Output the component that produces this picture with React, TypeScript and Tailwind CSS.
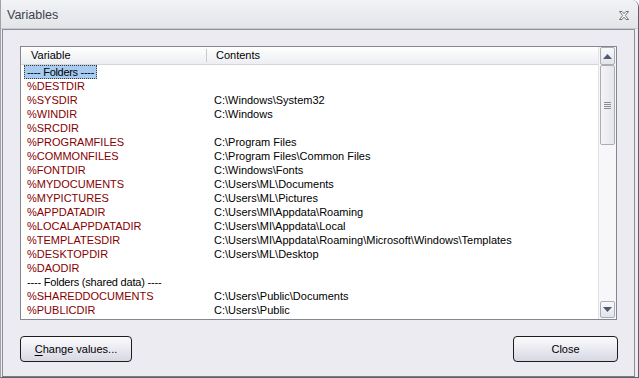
import React from "react";

const rows: { v: string; c?: string; kind?: "sep" | "sel" }[] = [
  { v: "---- Folders ----", kind: "sel" },
  { v: "%DESTDIR" },
  { v: "%SYSDIR", c: "C:\\Windows\\System32" },
  { v: "%WINDIR", c: "C:\\Windows" },
  { v: "%SRCDIR" },
  { v: "%PROGRAMFILES", c: "C:\\Program Files" },
  { v: "%COMMONFILES", c: "C:\\Program Files\\Common Files" },
  { v: "%FONTDIR", c: "C:\\Windows\\Fonts" },
  { v: "%MYDOCUMENTS", c: "C:\\Users\\ML\\Documents" },
  { v: "%MYPICTURES", c: "C:\\Users\\ML\\Pictures" },
  { v: "%APPDATADIR", c: "C:\\Users\\MI\\Appdata\\Roaming" },
  { v: "%LOCALAPPDATADIR", c: "C:\\Users\\MI\\Appdata\\Local" },
  { v: "%TEMPLATESDIR", c: "C:\\Users\\MI\\Appdata\\Roaming\\Microsoft\\Windows\\Templates" },
  { v: "%DESKTOPDIR", c: "C:\\Users\\ML\\Desktop" },
  { v: "%DAODIR" },
  { v: "---- Folders (shared data) ----", kind: "sep" },
  { v: "%SHAREDDOCUMENTS", c: "C:\\Users\\Public\\Documents" },
  { v: "%PUBLICDIR", c: "C:\\Users\\Public" },
];

function CloseX() {
  return (
    <svg width="12" height="11" viewBox="0 0 12 11">
      <path
        d="M1.5 1.5 H4 L6 3.8 L8 1.5 H10.5 L7.3 5.5 L10.5 9.5 H8 L6 7.2 L4 9.5 H1.5 L4.7 5.5 Z"
        fill="#ffffff"
        stroke="#6e6f73"
        strokeWidth="1"
        strokeLinejoin="miter"
      />
    </svg>
  );
}

export default function App() {
  return (
    <div
      className="w-[639px] h-[378px] flex flex-col bg-[#ecebf2] border-l border-l-[#a0a2a8] border-r border-r-[#5d6068] border-b border-b-[#5d6068] rounded-tr-[7px] overflow-hidden"
      style={{ fontFamily: '"Liberation Sans", Arial, sans-serif' }}
    >
      {/* Title bar */}
      <div className="h-[29px] shrink-0 flex items-center justify-between pl-[6px] pr-[8px] pt-[2px] bg-gradient-to-b from-[#f2f3f5] to-[#e4e5e9] border-b border-[#c9cbd1]">
        <span className="text-[12.5px] text-[#3d3f52] leading-none">Variables</span>
        <CloseX />
      </div>

      {/* Frame */}
      <div className="flex-1 ml-[1px] mr-[3px] flex flex-col border border-[#8d9099] border-b-[#7a7d86] bg-[#ecebf2] pt-[16px] px-[17px] pb-[14px]">
        {/* Listbox */}
        <div className="h-[274px] shrink-0 border border-[#828790] bg-white flex">
          <div className="flex-1 flex flex-col min-w-0">
            <div className="h-[18px] shrink-0 flex items-center bg-gradient-to-b from-[#ffffff] to-[#eceef2] border-b border-[#d5d5d5] text-[11px] text-black">
              <div className="w-[185px] pl-[10px] leading-none">Variable</div>
              <div className="w-[1px] h-[13px] bg-[#c7c9ce]" />
              <div className="pl-[9px] leading-none">Contents</div>
            </div>
            <div className="flex flex-col text-[11px]">
              {rows.map((r, i) => (
                <div key={i} className="h-[14px] flex items-center leading-none">
                  {r.kind === "sel" ? (
                    <div className="ml-[3px] pl-[3px] pr-[3px] h-[14px] flex items-center bg-[#a8cbf1] outline outline-1 outline-dotted outline-[#3a3a3a] -outline-offset-1 text-black tracking-[-0.3px]">
                      {r.v}
                    </div>
                  ) : r.kind === "sep" ? (
                    <div className="pl-[6px] text-black tracking-[-0.2px]">{r.v}</div>
                  ) : (
                    <>
                      <div className="w-[193px] pl-[6px] text-[#850000]">{r.v}</div>
                      <div className="text-black whitespace-nowrap">{r.c ?? ""}</div>
                    </>
                  )}
                </div>
              ))}
            </div>
          </div>
          {/* Scrollbar */}
          <div className="w-[18px] shrink-0 flex flex-col border-l border-[#e3e3e6] bg-[#f7f7f9] px-[1px] pt-[0px] pb-[1px]">
            <div className="h-[18px] shrink-0 flex items-center justify-center rounded-[2px] border border-[#a9adb6] bg-gradient-to-b from-[#f9f9fb] to-[#e3e4e9]">
              <svg width="9" height="5" viewBox="0 0 9 5">
                <path d="M0 5 L4.5 0 L9 5 Z" fill="#4b5878" />
              </svg>
            </div>
            <div className="h-[80px] shrink-0 flex items-center justify-center rounded-[2px] border border-[#a9adb6] bg-gradient-to-r from-[#f4f4f6] to-[#e6e7ec]">
              <div className="flex flex-col gap-[1px]">
                <div className="w-[7px] h-[1px] bg-[#8a8d94]" />
                <div className="w-[7px] h-[1px] bg-[#8a8d94]" />
                <div className="w-[7px] h-[1px] bg-[#8a8d94]" />
                <div className="w-[7px] h-[1px] bg-[#8a8d94]" />
              </div>
            </div>
            <div className="flex-1" />
            <div className="h-[17px] shrink-0 flex items-center justify-center rounded-[2px] border border-[#a9adb6] bg-gradient-to-b from-[#f9f9fb] to-[#e3e4e9]">
              <svg width="9" height="5" viewBox="0 0 9 5">
                <path d="M0 0 L9 0 L4.5 5 Z" fill="#4b5878" />
              </svg>
            </div>
          </div>
        </div>

        {/* Buttons */}
        <div className="mt-[16px] h-[26px] flex justify-between">
          <button className="w-[112px] h-[26px] rounded-[4px] border border-[#1c1c1c] bg-gradient-to-b from-[#fbfbfd] to-[#d8d8e4] text-[11px] text-black">
            <span className="underline underline-offset-2">C</span>hange values...
          </button>
          <button className="w-[105px] h-[26px] -mr-[1px] rounded-[4px] border border-[#1c1c1c] bg-gradient-to-b from-[#fbfbfd] to-[#d8d8e4] text-[11px] text-black">
            Close
          </button>
        </div>
      </div>
    </div>
  );
}
